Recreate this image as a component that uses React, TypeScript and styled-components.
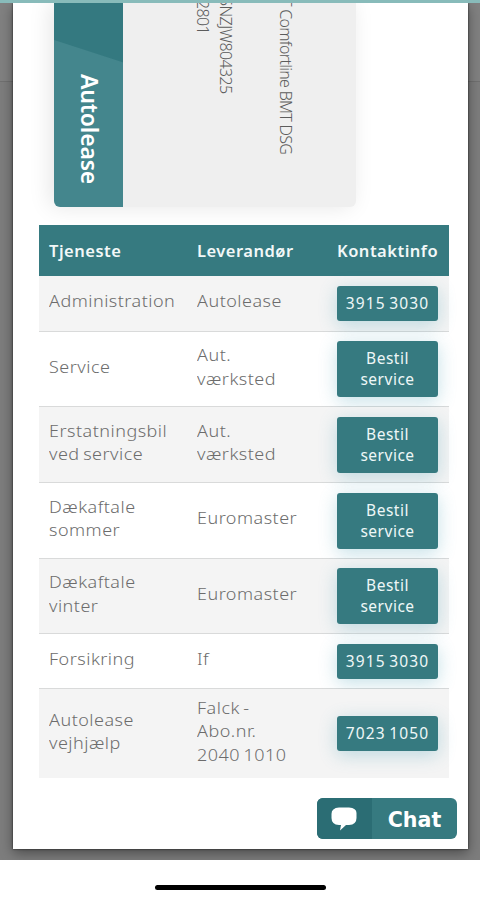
import React from "react";
import styled, { createGlobalStyle } from "styled-components";

const teal = "#367a80";

const GlobalStyle = createGlobalStyle`
  *, *::before, *::after { box-sizing: border-box; }
  html, body { margin: 0; padding: 0; background: #fff; }
  body { font-family: "Noto Sans", "Open Sans", sans-serif; overflow: hidden; }
`;

const Screen = styled.div`
  width: 480px;
  height: 900px;
  display: flex;
  flex-direction: column;
  overflow: hidden;
  background: #fff;
`;

const Backdrop = styled.div`
  height: 860px;
  flex: none;
  overflow: hidden;
  border-top: 3px solid #88bbba;
  background: linear-gradient(#818181 0 78px, #707070 78px 79px, #7d7d7d 79px 100%);
`;

const Sheet = styled.main`
  width: 455px;
  height: 846px;
  margin-left: 13px;
  display: flex;
  flex-direction: column;
  background: #fff;
  box-shadow: 0 0 2px rgba(0, 0, 0, 0.75), 0 4px 12px rgba(0, 0, 0, 0.4);
`;

const Card = styled.section`
  width: 302px;
  height: 204px;
  margin-left: 41px;
  flex: none;
  display: flex;
  overflow: hidden;
  clip-path: inset(0 -40px -30px -40px);
  border-radius: 0 0 6px 6px;
  background: #efefef;
  box-shadow: -4px 0 22px rgba(0, 0, 0, 0.1);
`;

const Brand = styled.div`
  width: 69px;
  display: flex;
  justify-content: center;
  align-items: flex-end;
  padding: 0 0 23px 2px;
  background: linear-gradient(198deg, #347980 0 56px, #44868d 57px);
`;

const VerticalText = styled.span<{ $size: number; $spacing?: number; $weight?: number; $color?: string }>`
  writing-mode: vertical-rl;
  white-space: nowrap;
  font-size: ${(p) => p.$size}px;
  line-height: 24px;
  font-weight: ${(p) => p.$weight ?? 300};
  letter-spacing: ${(p) => p.$spacing ?? 0}px;
  color: ${(p) => p.$color ?? "#5c5c5c"};
`;

const Details = styled.div`
  flex: 1;
  display: flex;
  align-items: flex-end;
  padding-left: 68px;
`;

const Detail = styled.div<{ $end: number; $width: number }>`
  width: ${(p) => p.$width}px;
  display: flex;
  padding-bottom: ${(p) => p.$end}px;
`;

const Table = styled.div`
  width: 410px;
  margin: 18px 0 0 26px;
  display: flex;
  flex-direction: column;
  color: #6c6c6c;
`;

const Row = styled.div<{ $height: number; $shaded?: boolean; $last?: boolean }>`
  height: ${(p) => p.$height}px;
  display: grid;
  grid-template-columns: 148px 140px 122px;
  align-items: center;
  background: ${(p) => (p.$shaded ? "#f4f4f4" : "transparent")};
  border-bottom: ${(p) => (p.$last ? "0" : "1px")} solid #d9dada;
`;

const HeaderRow = styled(Row)`
  background: ${teal};
  border: 0;
  color: #f2f8f8;
`;

const Cell = styled.div`
  margin-left: 10px;
  padding-bottom: 5px;
  font-size: 16.5px;
  line-height: 23.4px;
  font-weight: 300;
  letter-spacing: 0.45px;
  word-spacing: -1.5px;
  white-space: pre-line;
  transform: scaleX(1.09);
  transform-origin: left;
`;

const HeadCell = styled.div`
  padding: 0 0 1px 10px;
  font-size: 16.5px;
  line-height: 23px;
  letter-spacing: 0.5px;
  font-weight: 600;
  white-space: nowrap;
`;

const ActionCell = styled.div`
  padding: 0 11px 0 10px;
`;

const ActionButton = styled.button<{ $tall: boolean }>`
  display: flex;
  align-items: center;
  justify-content: center;
  width: 101px;
  height: ${(p) => (p.$tall ? 56 : 35)}px;
  padding: 0;
  border: 0;
  border-radius: 3px;
  background: ${teal};
  box-shadow: 0 4px 18px rgba(70, 160, 180, 0.32);
  color: #eef7f7;
  font-family: inherit;
  font-size: 15.5px;
  line-height: 20.6px;
  letter-spacing: ${(p) => (p.$tall ? 0.5 : 1.1)}px;
  word-spacing: -1.6px;
  text-align: center;
  white-space: pre-line;
`;

const ChatButton = styled.button`
  width: 140px;
  height: 41px;
  margin: 20px 11px 0 auto;
  display: flex;
  padding: 0;
  border: 0;
  border-radius: 6px;
  overflow: hidden;
  background: ${teal};
  color: #fff;
  font: bold 20.6px/44px "DejaVu Sans", sans-serif;
`;

const ChatIcon = styled.span`
  width: 55px;
  height: 41px;
  display: flex;
  align-items: center;
  justify-content: center;
  padding: 0 2px 0 0;
  background: #2b6d74;
`;

const ChatLabel = styled.span`
  flex: 1;
  text-align: center;
`;

const HomeArea = styled.footer`
  flex: 1;
  display: flex;
  justify-content: center;
  padding-top: 25px;
`;

const HomeIndicator = styled.div`
  width: 171px;
  height: 5px;
  border-radius: 3px;
  background: #000;
`;

const services = [
  { name: "Administration", supplier: "Autolease", action: "3915 3030", height: 56 },
  { name: "Service", supplier: "Aut.\nværksted", action: "Bestil\nservice", height: 75 },
  { name: "Erstatningsbil\nved service", supplier: "Aut.\nværksted", action: "Bestil\nservice", height: 76 },
  { name: "Dækaftale\nsommer", supplier: "Euromaster", action: "Bestil\nservice", height: 76 },
  { name: "Dækaftale\nvinter", supplier: "Euromaster", action: "Bestil\nservice", height: 75 },
  { name: "Forsikring", supplier: "If", action: "3915 3030", height: 55 },
  { name: "Autolease\nvejhjælp", supplier: "Falck -\nAbo.nr.\n2040 1010", action: "7023 1050", height: 89 },
];

export default function App() {
  return (
    <Screen>
      <GlobalStyle />
      <Backdrop>
        <Sheet>
          <Card>
            <Brand>
              <VerticalText $size={23} $weight={600} $spacing={-0.2} $color="#fff">Autolease</VerticalText>
            </Brand>
            <Details>
              <Detail $width={23} $end={173}>
                <VerticalText $size={16} $spacing={-0.6}>2801</VerticalText>
              </Detail>
              <Detail $width={60} $end={113}>
                <VerticalText $size={16} $spacing={-0.6}>5NZJW804325</VerticalText>
              </Detail>
              <Detail $width={24} $end={53}>
                <VerticalText $size={16} $spacing={-0.7}>T Comfortline BMT DSG</VerticalText>
              </Detail>
            </Details>
          </Card>
          <Table>
            <HeaderRow $height={51}>
              <HeadCell>Tjeneste</HeadCell>
              <HeadCell>Leverandør</HeadCell>
              <HeadCell>Kontaktinfo</HeadCell>
            </HeaderRow>
            {services.map((s, i) => (
              <Row key={s.name} $height={s.height} $shaded={i % 2 === 0} $last={i === services.length - 1}>
                <Cell>{s.name}</Cell>
                <Cell>{s.supplier}</Cell>
                <ActionCell>
                  <ActionButton $tall={s.action.includes("\n")}>{s.action}</ActionButton>
                </ActionCell>
              </Row>
            ))}
          </Table>
          <ChatButton>
            <ChatIcon>
              <svg width="26" height="24" viewBox="0 0 26 24" fill="#fff">
                <path d="M8 0.5H18Q25.5 1 25.5 6V11Q25.5 17.5 18 18H15L9 23.5L10 18H8Q0.5 17.5 0.5 11V7Q0.5 1 8 0.5Z" />
              </svg>
            </ChatIcon>
            <ChatLabel>Chat</ChatLabel>
          </ChatButton>
        </Sheet>
      </Backdrop>
      <HomeArea>
        <HomeIndicator />
      </HomeArea>
    </Screen>
  );
}
